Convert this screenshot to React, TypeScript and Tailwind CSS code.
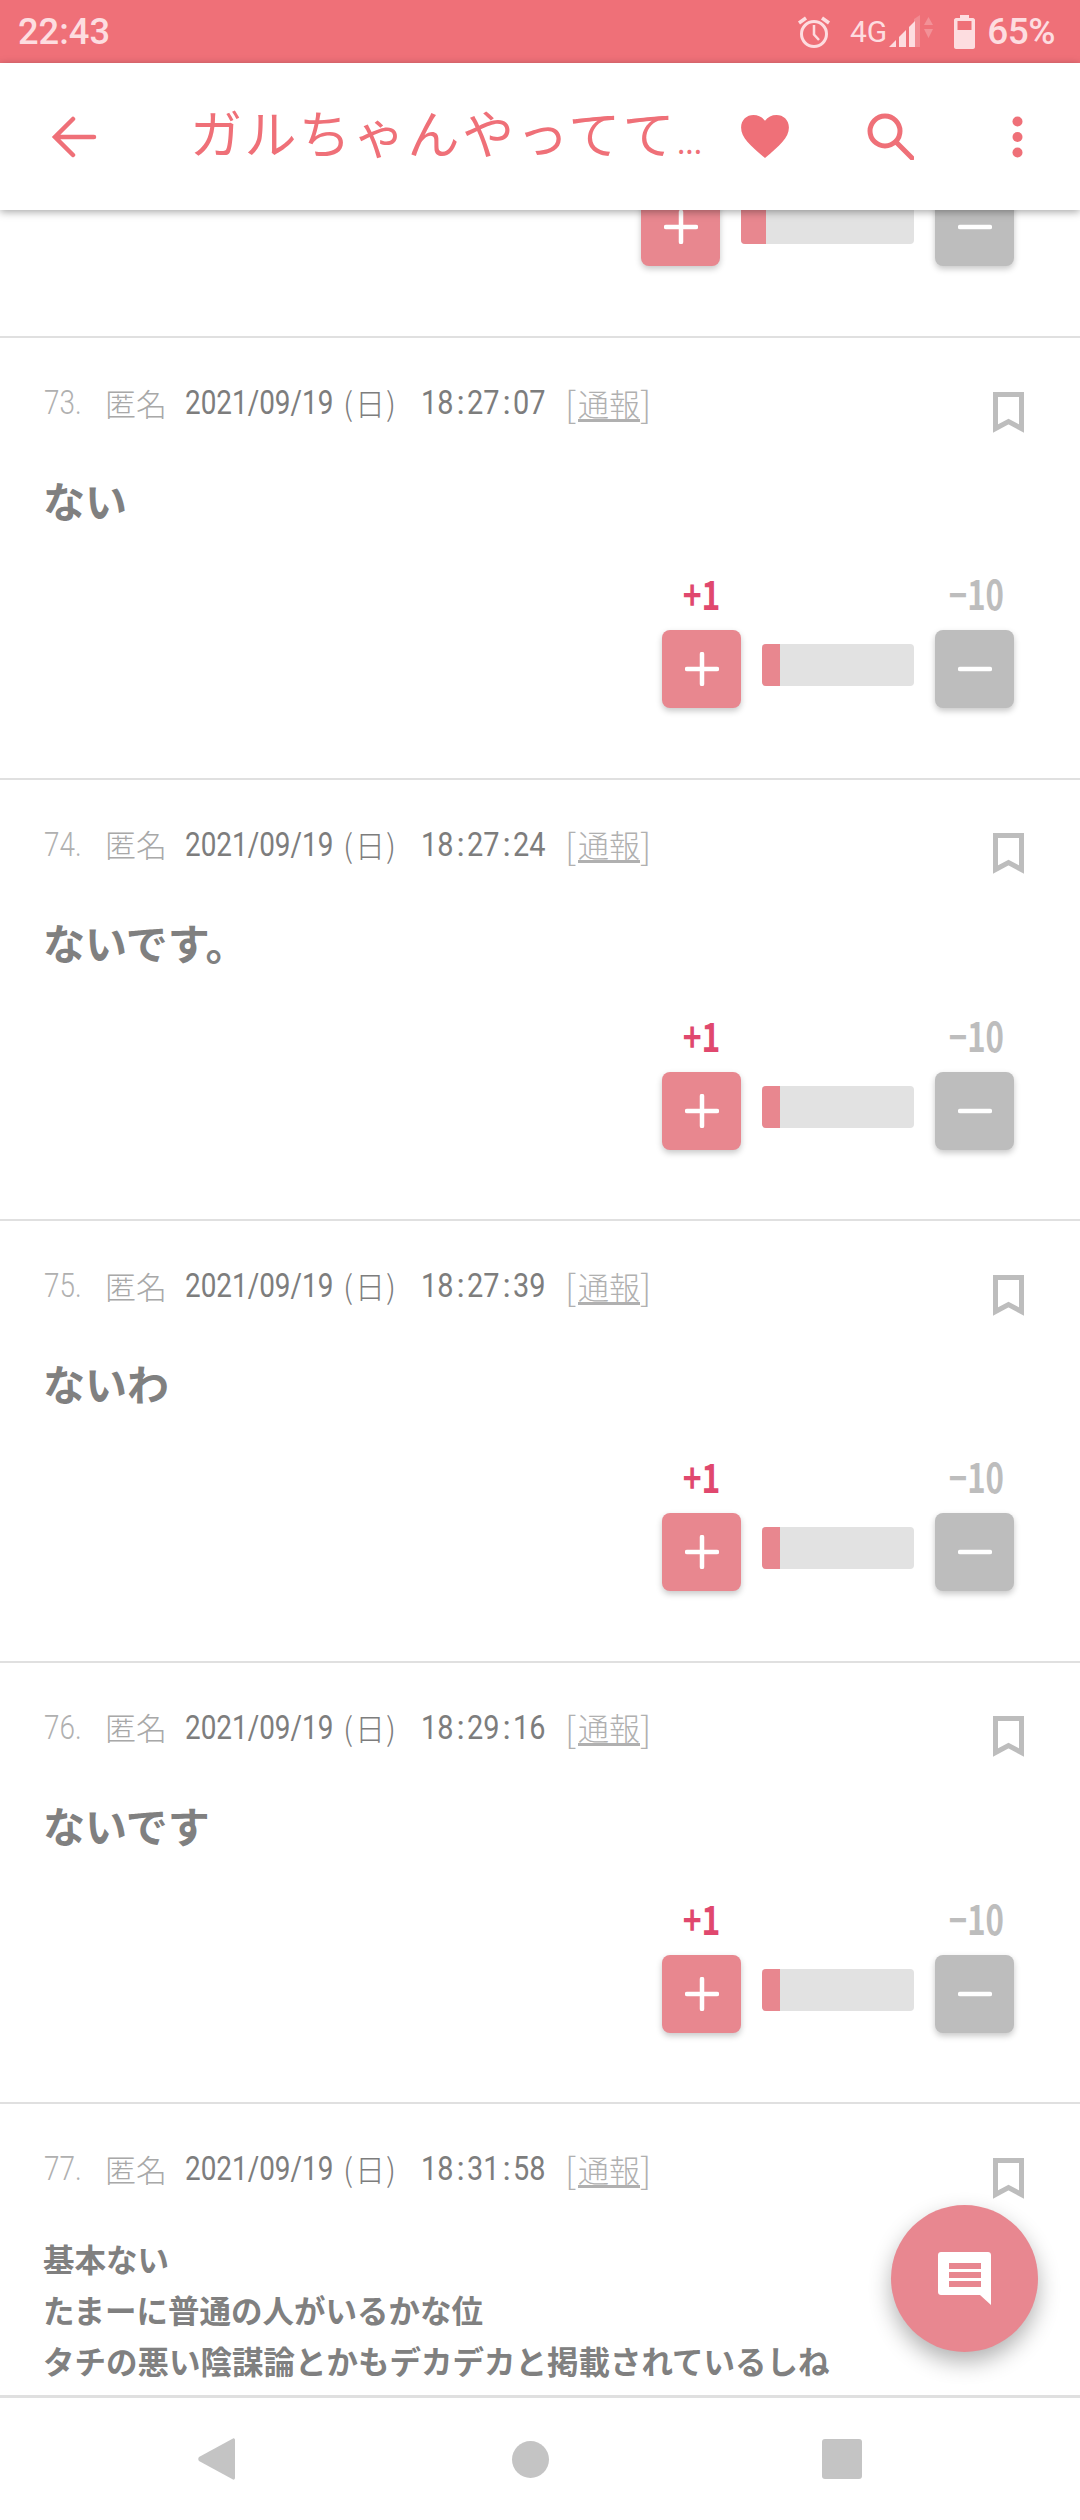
import React from "react";

const PINK = "#ef7078";

function Vote({ barW = 152, fillW = 18, labels = true }: { barW?: number; fillW?: number; labels?: boolean }) {
  return (
    <div className="flex justify-end pr-[66px]">
      <div className="flex w-[79px] flex-col items-center">
        <div className="flex h-[44px] -translate-y-[2px] items-center justify-center text-[40px] font-bold leading-none text-[#e0486e]">
          {labels && <span className="scale-x-[0.8]">+1</span>}
        </div>
        <div className="mt-[13px] flex h-[78px] w-[79px] items-center justify-center rounded-[8px] bg-[#e8878f] shadow-[0_3px_6px_rgba(0,0,0,0.22)]">
          <svg width="34" height="34" viewBox="0 0 34 34" fill="none" stroke="#fff" strokeWidth="4.5" strokeLinecap="round">
            <path d="M2 17H32M17 2V32" />
          </svg>
        </div>
      </div>
      <div className="mx-[21px] mt-[71px] flex h-[42px] overflow-hidden rounded-[4px] bg-[#e2e2e2]" style={{ width: barW }}>
        <div className="h-full bg-[#e8878f]" style={{ width: fillW }} />
      </div>
      <div className="flex w-[79px] flex-col items-center">
        <div className="flex h-[44px] -translate-y-[2px] items-center justify-center text-[40px] font-bold leading-none text-[#bdbdbd]">
          {labels && <span className="translate-x-[2px] scale-x-[0.78]">−10</span>}
        </div>
        <div className="mt-[13px] flex h-[78px] w-[79px] items-center justify-center rounded-[8px] bg-[#bdbdbd] shadow-[0_3px_6px_rgba(0,0,0,0.22)]">
          <svg width="34" height="6" viewBox="0 0 34 6" fill="none" stroke="#fff" strokeWidth="4.5" strokeLinecap="round">
            <path d="M2 3H32" />
          </svg>
        </div>
      </div>
    </div>
  );
}

function Meta({ n, time }: { n: number; time: string }) {
  return (
    <div className="flex h-[36px] -translate-y-[2px] items-center justify-between pl-[44px] pr-[56px]">
      <div className="flex items-center font-['Roboto','Noto_Sans_CJK_JP',sans-serif] text-[34px] font-light leading-none whitespace-nowrap">
        <span className="w-[61px] origin-left scale-x-[0.82] text-[#b0b0b0]">{n}.</span>
        <span className="w-[80px] font-['Noto_Sans_CJK_JP',sans-serif] text-[31px] text-[#a8a8a8]">匿名</span>
        <span className="w-[158px] origin-left scale-x-[0.82] font-normal text-[#7d7d7d]">2021/09/19</span>
        <span className="flex w-[78px] items-center font-['Noto_Sans_CJK_JP',sans-serif] font-light text-[#7d7d7d]">
          <span className="w-[12px] text-[32px]">(</span>
          <span className="w-[31px] text-[30px]">日</span>
          <span className="text-[32px]">)</span>
        </span>
        <span className="flex w-[144px] items-center font-normal text-[#7d7d7d]">
          <span className="w-[33px] origin-left scale-x-[0.85]">{time.slice(0, 2)}</span>
          <span className="w-[13px] text-center">:</span>
          <span className="w-[33px] origin-left scale-x-[0.85]">{time.slice(3, 5)}</span>
          <span className="w-[13px] text-center">:</span>
          <span className="w-[32px] origin-left scale-x-[0.85]">{time.slice(6, 8)}</span>
        </span>
        <span className="flex w-[85px] items-center font-['Noto_Sans_CJK_JP',sans-serif] text-[#b0b0b0]">
          <span className="w-[13px] text-[36px]">[</span>
          <span className="w-[62px] text-[31px] underline underline-offset-[3px]">通報</span>
          <span className="w-[10px] text-[36px]">]</span>
        </span>
      </div>
      <svg className="mt-[20px]" width="31" height="41" viewBox="0 0 31 41" fill="none" stroke="#bdbdbd" strokeWidth="5">
        <path d="M2.5 2.5H28.5V36.5L15.5 29.5L2.5 36.5Z" />
      </svg>
    </div>
  );
}

function Row({ n, time, body }: { n: number; time: string; body: string }) {
  return (
    <div className="box-border h-[441.5px] shrink-0 border-b-2 border-[#e0e0e0] pt-[48px]">
      <Meta n={n} time={time} />
      <div className="mt-[48px] flex h-[60px] items-center pl-[43px] text-[42px] font-bold leading-none text-[#808080]">{body}</div>
      <div className="mt-[43px]">
        <Vote />
      </div>
    </div>
  );
}

export default function App() {
  return (
    <div className="relative flex h-[2520px] w-[1080px] flex-col overflow-hidden bg-white font-['Noto_Sans_CJK_JP',sans-serif]">
      <div className="flex h-[63px] shrink-0 items-center justify-between bg-[#ef7078] pl-[18px] pr-[25px] font-['Roboto',sans-serif] text-[#fddde0]">
        <span className="origin-left scale-x-[0.98] text-[37px] font-medium leading-none">22:43</span>
        <div className="flex items-center">
          <svg width="34" height="34" viewBox="0 0 34 34" fill="none" stroke="#fddde0" strokeWidth="3">
            <circle cx="17" cy="19" r="12.5" />
            <path d="M17 10V19.5L22 25" strokeWidth="2.5" />
            <path d="M2 8L9 3M32 8L25 3" strokeWidth="3.5" />
          </svg>
          <span className="ml-[19px] text-[30px] leading-none">4G</span>
          <svg className="ml-[2px]" width="44" height="34" viewBox="0 0 44 34" fill="#fddde0">
            <path d="M0 32L7 25V32Z" />
            <path d="M10 32V22L17 15V32Z" />
            <path d="M20 32V12L26 6V32Z" />
            <path d="M25 32V4L31 0V32Z" opacity="0.25" />
            <path d="M35 10L39.5 2L44 10Z M35 14H44L39.5 23Z" opacity="0.3" />
          </svg>
          <svg className="ml-[21px]" width="21" height="34" viewBox="0 0 21 34" fill="#fddde0">
            <path d="M6 0H15V3H19C20 3 21 4 21 5V32C21 33 20 34 19 34H2C1 34 0 33 0 32V5C0 4 1 3 2 3H6Z" />
            <rect x="3.5" y="6" width="14" height="9" fill="#ef7078" />
          </svg>
          <span className="ml-[12px] text-[37px] font-medium leading-none tracking-[-0.5px]">65%</span>
        </div>
      </div>

      <div className="relative z-10 flex h-[147px] shrink-0 items-center bg-white shadow-[0_2px_8px_rgba(0,0,0,0.35)]">
        <svg className="ml-[51px]" width="46" height="42" viewBox="0 0 46 42" fill="none" stroke={PINK} strokeWidth="4.5" strokeLinecap="round" strokeLinejoin="miter">
          <path d="M22 3L4 21L22 39M4 21H43" />
        </svg>
        <span className="ml-[93px] block w-[551px] text-[52px] leading-[76px] tracking-[2.4px] whitespace-nowrap text-[#ef7078]">
          ガルちゃんやってて<span className="text-[30px] tracking-[0px]">...</span>
        </span>
        <svg width="48" height="44" viewBox="0 0 50 46" fill={PINK}>
          <path d="M25 45C10 32 0 24 0 13C0 5 6 0 13 0C18 0 22 2 25 6C28 2 32 0 37 0C44 0 50 5 50 13C50 24 40 32 25 45Z" />
        </svg>
        <svg className="ml-[78px]" width="47" height="47" viewBox="0 0 47 47" fill="none" stroke={PINK} strokeWidth="5">
          <circle cx="18" cy="18" r="15" />
          <path d="M29 29L45 45" strokeLinecap="round" />
        </svg>
        <svg className="ml-[98px]" width="11" height="42" viewBox="0 0 11 42" fill={PINK}>
          <circle cx="5.5" cy="5.5" r="5" />
          <circle cx="5.5" cy="21" r="5" />
          <circle cx="5.5" cy="36.5" r="5" />
        </svg>
      </div>

      <div className="flex min-h-0 flex-1 flex-col overflow-hidden">
        <div className="box-border flex h-[128px] shrink-0 flex-col justify-end border-b-2 border-[#e0e0e0] pb-[70px]">
          <Vote barW={173} fillW={25} labels={false} />
        </div>
        <Row n={73} time="18:27:07" body="ない" />
        <Row n={74} time="18:27:24" body="ないです。" />
        <Row n={75} time="18:27:39" body="ないわ" />
        <Row n={76} time="18:29:16" body="ないです" />
        <div className="shrink-0 pt-[48px]">
          <Meta n={77} time="18:31:58" />
          <div className="mt-[45px] pl-[43px] text-[31.5px] font-bold leading-[51px] text-[#808080]">
            <div>基本ない</div>
            <div>たまーに普通の人がいるかな位</div>
            <div>タチの悪い陰謀論とかもデカデカと掲載されているしね</div>
          </div>
        </div>
      </div>

      <div className="relative z-10 flex h-[125px] shrink-0 items-center border-t-[3px] border-[#e0e0e0] bg-white">
        <svg className="ml-[198px]" width="37" height="42" viewBox="0 0 37 42" fill="#c4c4c4">
          <path d="M35 0.5C36 0 37 1 37 2V40C37 41 36 42 35 41.5L1 23C0 22 0 20 1 19Z" />
        </svg>
        <div className="ml-[277px] h-[37px] w-[37px] rounded-full bg-[#c4c4c4]" />
        <div className="ml-[273px] h-[40px] w-[40px] rounded-[3px] bg-[#c4c4c4]" />
      </div>

      <div className="absolute left-[891px] top-[2205px] z-20 flex h-[147px] w-[147px] items-center justify-center rounded-full bg-[#e88790] shadow-[0_10px_22px_rgba(0,0,0,0.3)]">
        <svg width="53" height="53" viewBox="0 0 53 53">
          <path d="M3 0H50C51.7 0 53 1.3 53 3V53L42 43H3C1.3 43 0 41.7 0 40V3C0 1.3 1.3 0 3 0Z" fill="#fff" />
          <rect x="11" y="11" width="32" height="6" fill="#e88790" />
          <rect x="11" y="20" width="32" height="6" fill="#e88790" />
          <rect x="11" y="29" width="32" height="6" fill="#e88790" />
        </svg>
      </div>
    </div>
  );
}
